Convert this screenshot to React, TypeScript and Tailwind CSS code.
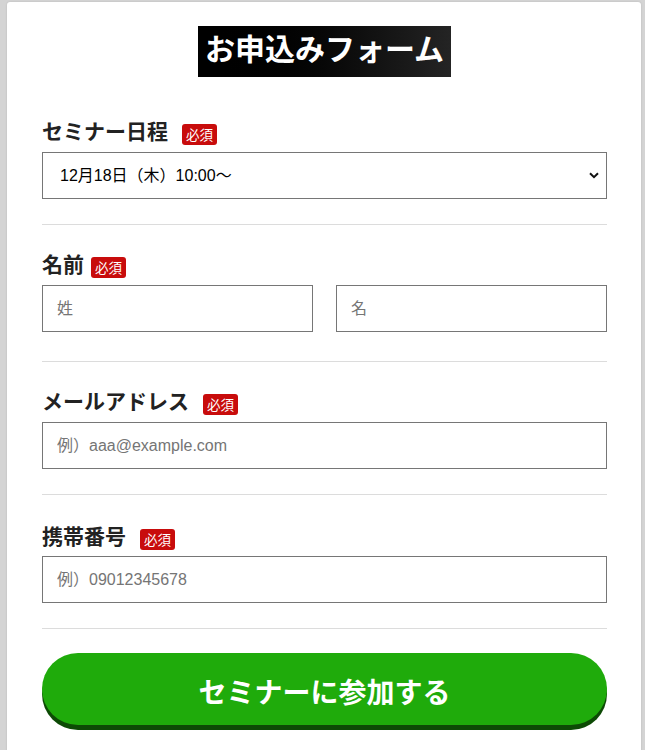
import React, { useState } from 'react';

const jp = { fontFamily: '"Liberation Sans", "Noto Sans CJK JP", sans-serif' };

type LabelProps = { text: string; gap: string };

const FieldLabel: React.FC<LabelProps> = ({ text, gap }) => (
  <div className="flex h-[28px] items-center">
    <span className="text-[21px] font-bold leading-[28px] text-[#222]" style={{ fontFamily: '"Noto Sans CJK JP", sans-serif' }}>
      {text}
    </span>
    <span
      className={`${gap} translate-y-[4px] rounded-[3px] bg-[#c80c0c] px-[4px] text-[13.5px] leading-[21px] text-white`}
      style={{ fontFamily: '"Noto Sans CJK JP", sans-serif' }}
    >
      必須
    </span>
  </div>
);

const inputClass =
  'block h-[47px] w-full border border-[#767676] bg-white px-[14px] text-[16px] text-[#222] outline-none placeholder:text-[#757575]';

const App: React.FC = () => {
  const [date, setDate] = useState('1218');
  const [sei, setSei] = useState('');
  const [mei, setMei] = useState('');
  const [email, setEmail] = useState('');
  const [tel, setTel] = useState('');

  return (
    <div className="min-h-screen bg-[#d4d4d4] pl-[7px] pr-[4px] pt-[2px]" style={jp}>
      <div className="min-h-[760px] rounded-[3px] bg-white pl-[35px] pr-[34px] pt-[24px] shadow-[0_0_2px_rgba(0,0,0,0.15)]">
        {/* Title */}
        <div className="flex justify-center">
          <h1
            className="h-[51px] bg-gradient-to-r from-black to-[#242424] px-[7px] text-[30px] font-bold leading-[43px] text-white"
            style={{ fontFamily: '"Noto Sans CJK JP", sans-serif' }}
          >
            お申込みフォーム
          </h1>
        </div>

        {/* Seminar date */}
        <div className="mt-[39px] border-b border-[#dcdcdc] pb-[25px]">
          <FieldLabel text="セミナー日程" gap="ml-[14px]" />
          <div className="relative mt-[8px]">
            <select
              value={date}
              onChange={(e) => setDate(e.target.value)}
              className="block h-[47px] w-full appearance-none border border-[#767676] bg-white pl-[17px] pr-[30px] text-[16px] text-black outline-none"
            >
              <option value="1218">12月18日（木）10:00～</option>
              <option value="1219">12月19日（金）10:00～</option>
              <option value="1220">12月20日（土）14:00～</option>
            </select>
            <svg
              className="pointer-events-none absolute right-[8px] top-[20px] h-[7px] w-[10px]"
              viewBox="0 0 10 7"
              fill="none"
            >
              <path d="M1 1.2 L5 5.2 L9 1.2" stroke="#111" strokeWidth="2" />
            </svg>
          </div>
        </div>

        {/* Name */}
        <div className="mt-[24px] border-b border-[#dcdcdc] pb-[29px]">
          <FieldLabel text="名前" gap="ml-[7px]" />
          <div className="mt-[8px] grid grid-cols-2 gap-[23px]">
            <input value={sei} onChange={(e) => setSei(e.target.value)} placeholder="姓" className={inputClass} />
            <input value={mei} onChange={(e) => setMei(e.target.value)} placeholder="名" className={inputClass} />
          </div>
        </div>

        {/* Email */}
        <div className="mt-[24px] border-b border-[#dcdcdc] pb-[25px]">
          <FieldLabel text="メールアドレス" gap="ml-[14px]" />
          <input
            type="email"
            value={email}
            onChange={(e) => setEmail(e.target.value)}
            placeholder="例）aaa@example.com"
            className={`mt-[8px] ${inputClass}`}
          />
        </div>

        {/* Phone */}
        <div className="mt-[26px] border-b border-[#dcdcdc] pb-[25px]">
          <FieldLabel text="携帯番号" gap="ml-[14px]" />
          <input
            type="tel"
            value={tel}
            onChange={(e) => setTel(e.target.value)}
            placeholder="例）09012345678"
            className={`mt-[7px] ${inputClass}`}
          />
        </div>

        {/* Submit */}
        <button
          type="button"
          className="mt-[24px] flex h-[72px] w-full items-center justify-center rounded-full bg-[#1fab0b] pt-[4px] text-[28px] font-bold text-white shadow-[0_5px_0_#0d4a05]"
          style={{ fontFamily: '"Noto Sans CJK JP", sans-serif' }}
        >
          セミナーに参加する
        </button>
      </div>
    </div>
  );
};

export default App;
